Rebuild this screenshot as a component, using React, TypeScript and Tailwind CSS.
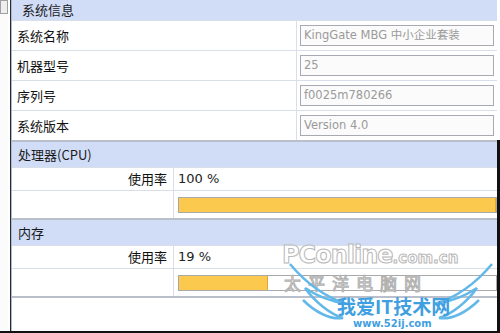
import React from "react";

const cjk = { fontFamily: '"Noto Sans CJK SC", "DejaVu Sans", sans-serif' };
const ver = { fontFamily: '"DejaVu Sans", "Noto Sans CJK SC", sans-serif' };

function InfoRow({ label, value }: { label: string; value: string }) {
  return (
    <div className="flex h-[30px] border-t border-[#d9dfe9]">
      <div className="w-[285px] border-r border-[#d9dfe9] flex items-center pl-[5px] text-[13px] text-[#111]" style={cjk}>
        {label}
      </div>
      <div className="flex-1 flex items-center pl-[3px] pr-[3px]">
        <div className="w-[194px] h-[21px] border border-[#a7aab0] bg-[#fbfbfb] flex items-center pl-[3px] text-[11.5px] text-[#9a9a9a] whitespace-nowrap overflow-hidden" style={ver}>
          {value}
        </div>
      </div>
    </div>
  );
}

function UsageBlock({ title, pct, fill }: { title: string; pct: number; fill: string }) {
  return (
    <div className="flex flex-col">
      <div className="h-[25px] bg-[#d1ddf6] flex items-center pl-[6px] text-[13px] text-[#1a1a1a]" style={cjk}>
        {title}
      </div>
      <div className="flex h-[23px] border-t border-[#d9dfe9]">
        <div className="w-[162px] border-r border-[#d9dfe9] flex items-center justify-end pr-[6px] text-[13px] text-[#111]" style={cjk}>
          使用率
        </div>
        <div className="flex-1 flex items-center pl-[4px] text-[13px] text-[#222]" style={ver}>
          {pct} %
        </div>
      </div>
      <div className="flex h-[28px] border-t border-[#d9dfe9]">
        <div className="w-[162px] border-r border-[#d9dfe9]" />
        <div className="flex-1 flex items-center pl-[4px]">
          <div className="flex-1 h-[16px] border border-[#a9a9a9] bg-white flex">
            <div className="h-full bg-[#fcc94f] border-r border-[#e0a83a]" style={{ width: fill }} />
          </div>
        </div>
      </div>
    </div>
  );
}

export default function App() {
  return (
    <div className="w-[500px] h-[333px] bg-white flex flex-col overflow-hidden relative">
      <div className="flex flex-1 min-h-0">
        <div className="w-[10px] flex flex-col">
          <div className="w-[8px] h-[14px] border border-[#a0a0a0] bg-[#eeeeee]" />
          <div className="flex-1 bg-[#fbfbfb] w-[8px]" />
        </div>
        <div className="w-[1px] bg-[#2a2a2a]" />
        <div className="flex-1 border-l border-[#aab9d3] flex flex-col">
          <div className="flex flex-col border-b-2 border-[#b9c0cc]">
            <div className="h-[20px] bg-[#d1ddf6] flex items-center pl-[10px] text-[13px] text-[#1a1a1a]" style={cjk}>
              系统信息
            </div>
            <InfoRow label="系统名称" value="KingGate MBG 中小企业套装" />
            <InfoRow label="机器型号" value="25" />
            <InfoRow label="序列号" value="f0025m780266" />
            <InfoRow label="系统版本" value="Version 4.0" />
          </div>
          <div className="border-b-2 border-[#b9c0cc]">
            <UsageBlock title="处理器(CPU)" pct={100} fill="100%" />
          </div>
          <div className="border-b-2 border-[#b9c0cc]">
            <UsageBlock title="内存" pct={19} fill="89px" />
          </div>
          <div className="flex-1" />
        </div>
        <div className="w-[3px] flex flex-col">
          <div className="h-[140px] bg-white" />
          <div className="flex-1 bg-[#111]" />
        </div>
      </div>
      <div className="h-[2px] bg-[#111]" />

      {/* watermark */}
      <div className="absolute left-[282px] top-[243px] text-[24px] leading-none font-bold text-white tracking-[-1px] whitespace-nowrap" style={{ fontFamily: '"DejaVu Sans", sans-serif', WebkitTextStroke: "1px #b8b8b8" }}>
        PConline<span className="text-[15px] tracking-[0px]">.com.cn</span>
      </div>
      <div className="absolute left-[284px] top-[274px] text-[17px] leading-none text-white tracking-[7px]" style={{ ...cjk, WebkitTextStroke: "1px #b0b0b0" }}>
        太平洋电脑网
      </div>
      <svg className="absolute left-[285px] top-[262px]" width="212" height="68" viewBox="0 0 212 68">
        <path d="M5 2 C 20 20, 40 35, 62 42 C 48 40, 32 34, 20 26 C 30 40, 45 52, 58 56 C 45 58, 30 50, 18 38" fill="none" stroke="#63b8ea" strokeWidth="2.5" />
        <path d="M207 2 C 192 20, 172 35, 150 42 C 164 40, 180 34, 192 26 C 182 40, 167 52, 154 56 C 167 58, 182 50, 194 38" fill="none" stroke="#63b8ea" strokeWidth="2.5" />
      </svg>
      <div className="absolute left-[337px] top-[296px] text-[19px] leading-none font-bold text-[#3f9fe0]" style={cjk}>
        我爱IT技术网
      </div>
      <div className="absolute left-[353px] top-[319px] text-[10px] leading-none font-bold text-[#3f9fe0]" style={ver}>
        www.52ij.com
      </div>
    </div>
  );
}
